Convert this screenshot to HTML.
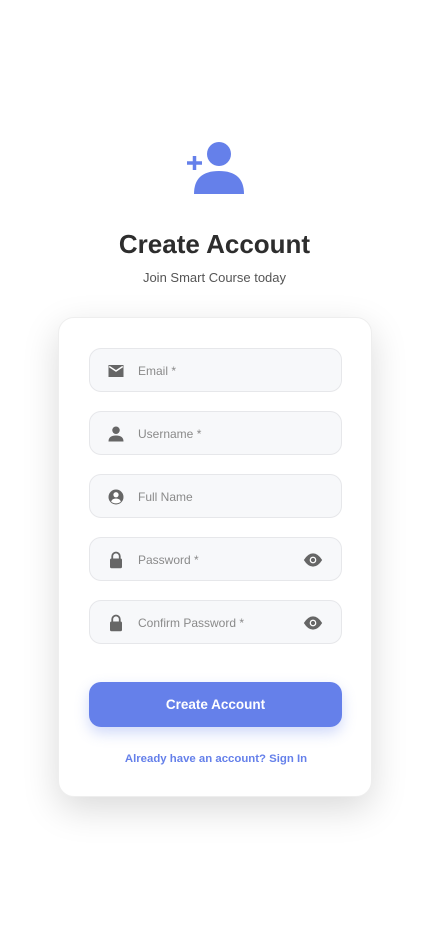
<!DOCTYPE html>
<html><head><meta charset="utf-8"><style>
*{margin:0;padding:0;box-sizing:border-box}
body{width:429px;height:931px;background:#fff;font-family:"Liberation Sans",sans-serif;position:relative;overflow:hidden}
.ic{position:absolute;left:186px;top:141px}
h1{position:absolute;top:229px;left:0;width:429px;text-align:center;font-size:26px;font-weight:bold;color:#2d2d2d}
.sub{position:absolute;top:270px;left:0;width:429px;text-align:center;font-size:13px;color:#555}
.card{position:absolute;left:58px;top:317px;width:314px;height:480px;background:#fff;border-radius:16px;box-shadow:0 12px 36px rgba(0,0,0,.15);border:1px solid #eee}
.in{position:absolute;left:30px;width:253px;height:44px;background:#f7f8fa;border:1px solid #e6e7ea;border-radius:12px}
.in svg{position:absolute;left:17px;top:13px}
.in span{position:absolute;left:48px;top:15px;font-size:12px;color:#8a8a8a}
.in .eye{left:auto;right:18px;top:14px}
.btn{position:absolute;left:30px;top:364px;width:253px;height:45px;background:#6580ea;border-radius:12px;color:#fff;font-weight:bold;font-size:13.5px;text-align:center;line-height:45px;box-shadow:0 6px 14px rgba(101,128,234,.3)}
.lnk{position:absolute;left:0;top:435px;width:314px;text-align:center;font-size:11.4px;color:#6580ea;font-weight:bold}
</style></head><body>
<svg class="ic" width="58" height="53" viewBox="0 0 58 53"><circle cx="33" cy="13" r="12" fill="#6580ea"/><path d="M8 53 Q8 30 33 30 Q58 30 58 53 Z" fill="#6580ea"/><path d="M1 22h15M8.5 15v14" stroke="#6580ea" stroke-width="3.5"/></svg>
<h1>Create Account</h1>
<div class="sub">Join Smart Course today</div>
<div class="card">
<div class="in" style="top:30px"><svg width="18" height="18" viewBox="0 0 24 24"><path d="M2 4h20v16H2z" fill="#666"/><path d="M3 6l9 6 9-6" stroke="#fff" stroke-width="2" fill="none"/></svg><span>Email *</span></div>
<div class="in" style="top:93px"><svg width="18" height="18" viewBox="0 0 24 24"><circle cx="12" cy="7" r="5" fill="#666"/><path d="M2 22q0-8 10-8t10 8z" fill="#666"/></svg><span>Username *</span></div>
<div class="in" style="top:156px"><svg width="18" height="18" viewBox="0 0 24 24"><circle cx="12" cy="12" r="10" fill="#666"/><circle cx="12" cy="9" r="3.5" fill="#fff"/><path d="M5.5 18q1.5-4 6.5-4t6.5 4q-2.5 2.5-6.5 2.5T5.5 18z" fill="#fff"/></svg><span>Full Name</span></div>
<div class="in" style="top:219px"><svg width="18" height="18" viewBox="0 0 24 24"><path d="M7 11V7a5 5 0 0110 0v4" stroke="#666" stroke-width="2.4" fill="none"/><rect x="4" y="10" width="16" height="13" rx="2" fill="#666"/></svg><span>Password *</span><svg class="eye" width="20" height="16" viewBox="0 0 24 16"><path d="M1 8Q6 0 12 0t11 8q-5 8-11 8T1 8z" fill="#666"/><circle cx="12" cy="8" r="4" fill="#fff"/><circle cx="12" cy="8" r="2.5" fill="#666"/></svg></div>
<div class="in" style="top:282px"><svg width="18" height="18" viewBox="0 0 24 24"><path d="M7 11V7a5 5 0 0110 0v4" stroke="#666" stroke-width="2.4" fill="none"/><rect x="4" y="10" width="16" height="13" rx="2" fill="#666"/></svg><span>Confirm Password *</span><svg class="eye" width="20" height="16" viewBox="0 0 24 16"><path d="M1 8Q6 0 12 0t11 8q-5 8-11 8T1 8z" fill="#666"/><circle cx="12" cy="8" r="4" fill="#fff"/><circle cx="12" cy="8" r="2.5" fill="#666"/></svg></div>
<div class="btn">Create Account</div>
<div class="lnk">Already have an account? Sign In</div>
</div>
</body></html>
